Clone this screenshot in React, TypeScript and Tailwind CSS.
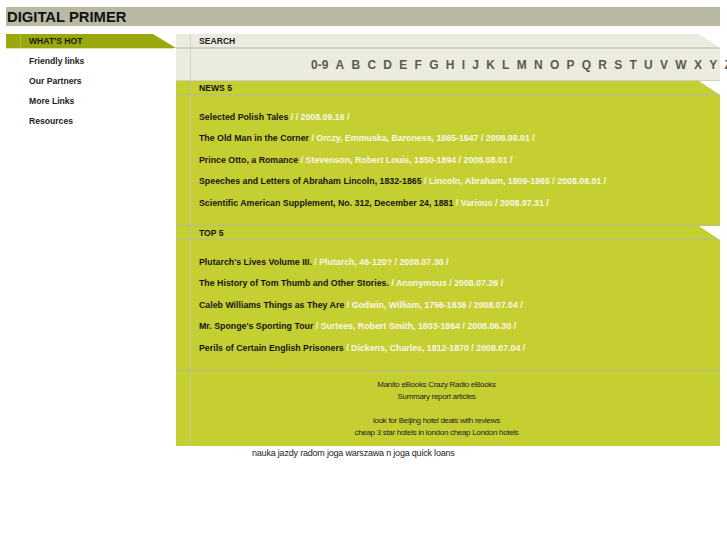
const letters = ['0-9', 'A', 'B', 'C', 'D', 'E', 'F', 'G', 'H', 'I', 'J', 'K', 'L', 'M', 'N', 'O', 'P', 'Q', 'R', 'S', 'T', 'U', 'V', 'W', 'X', 'Y', 'Z']

const news = [
  ['Selected Polish Tales', '', '2008.09.16'],
  ['The Old Man in the Corner', 'Orczy, Emmuska, Baroness, 1865-1947', '2008.08.01'],
  ['Prince Otto, a Romance', 'Stevenson, Robert Louis, 1850-1894', '2008.08.01'],
  ['Speeches and Letters of Abraham Lincoln, 1832-1865', 'Lincoln, Abraham, 1809-1865', '2008.08.01'],
  ['Scientific American Supplement, No. 312, December 24, 1881', 'Various', '2008.07.31'],
]

const top = [
  ["Plutarch's Lives Volume III.", 'Plutarch, 46-120?', '2008.07.30'],
  ['The History of Tom Thumb and Other Stories.', 'Anonymous', '2008.07.26'],
  ['Caleb Williams Things as They Are', 'Godwin, William, 1756-1836', '2008.07.04'],
  ["Mr. Sponge's Sporting Tour", 'Surtees, Robert Smith, 1803-1864', '2008.06.30'],
  ['Perils of Certain English Prisoners', 'Dickens, Charles, 1812-1870', '2008.07.04'],
]

function SectionHead({ label }: { label: string }) {
  return (
    <div className="flex h-[14px] bg-[#c6cf31] border-b border-[#b9bb96] [clip-path:polygon(0_0,calc(100%-21px)_0,100%_100%,0_100%)]">
      <div className="w-[15px] shrink-0 border-r border-[#c2c699]" />
      <div className="pl-[8px] text-[8.6px] font-bold leading-[14px] text-[#111]">{label}</div>
    </div>
  )
}

function BookList({ items }: { items: string[][] }) {
  return (
    <div className="flex h-[131px] bg-[#c6cf31] border-b border-[#b9bb96]">
      <div className="w-[15px] shrink-0 border-r border-[#c2c699]" />
      <div className="pl-[8px] pt-[12px]">
        {items.map(([title, author, date]) => (
          <div key={title} className="h-[21.4px] whitespace-nowrap text-[8.8px] font-bold leading-[21.4px]">
            <span className="text-[#151515]">{title}</span>
            <span className="text-[#f8f8ea]">
              {' / '}
              {author}
              {' / '}
              {date}
              {' /'}
            </span>
          </div>
        ))}
      </div>
    </div>
  )
}

export default function App() {
  return (
    <div className="w-[727px] overflow-hidden bg-white pt-[7px] pl-[6px] font-['Liberation_Sans',Arial,sans-serif] text-[#111]">
      <div className="h-[19px] w-[714px] bg-[#b9b9a3] pl-[1px] text-[14.8px] font-bold leading-[20px] text-[#111]">
        DIGITAL PRIMER
      </div>

      <div className="mt-[8px] flex w-[714px]">
        {/* left menu */}
        <div className="w-[170px] shrink-0">
          <div className="flex h-[14px] bg-[#9aa80e] [clip-path:polygon(0_0,147px_0,170px_100%,0_100%)]">
            <div className="w-[15px] shrink-0 border-r border-[#b4c031]" />
            <div className="pl-[8px] text-[8.6px] font-bold leading-[14px] text-[#1a1a00]">WHAT'S HOT</div>
          </div>
          <div className="h-px w-[168px] bg-[#dfe3b0]" />
          <div className="pt-[2px] pl-[23px] text-[8.6px] font-bold leading-[20px] text-[#222]">
            <div>Friendly links</div>
            <div>Our Partners</div>
            <div>More Links</div>
            <div>Resources</div>
          </div>
        </div>

        {/* main column */}
        <div className="w-[544px] shrink-0">
          <div className="flex h-[14px] bg-[#ebebe0] border-b border-[#cfcfc2] [clip-path:polygon(0_0,calc(100%-21px)_0,100%_100%,0_100%)]">
            <div className="w-[15px] shrink-0 border-r border-[#d2d2c4]" />
            <div className="pl-[8px] text-[8.6px] font-bold leading-[14px] text-[#222]">SEARCH</div>
          </div>
          <div className="flex h-[33px] bg-[#ebebe0] border-t border-b border-[#cfcfc2]">
            <div className="w-[15px] shrink-0 border-r border-[#d2d2c4]" />
            <div className="flex items-center gap-[7.25px] whitespace-nowrap pl-[120px] text-[12px] font-bold text-[#5a5a52]">
              {letters.map((l) => (
                <span key={l}>{l}</span>
              ))}
            </div>
          </div>

          <SectionHead label="NEWS 5" />
          <BookList items={news} />
          <SectionHead label="TOP 5" />
          <BookList items={top} />

          <div className="flex h-[75px] bg-[#c6cf31]">
            <div className="w-[15px] shrink-0 border-r border-[#c2c699]" />
            <div className="flex-1 pt-[8px] pr-[38px] text-center text-[8px] leading-[12px] tracking-[-0.3px] text-[#222]">
              <div>Manito eBooks Crazy Radio eBooks</div>
              <div>Summary report articles</div>
              <div>&nbsp;</div>
              <div>look for Beijing hotel deals with reviews</div>
              <div>cheap 3 star hotels in london cheap London hotels</div>
            </div>
          </div>
        </div>
      </div>

      <div className="h-px w-[714px]" />
      <div className="pl-[246px] text-[9px] leading-[12px] tracking-[-0.2px] text-[#222]">
        nauka jazdy radom joga warszawa n joga quick loans
      </div>
      <div className="h-[80px]" />
    </div>
  )
}
